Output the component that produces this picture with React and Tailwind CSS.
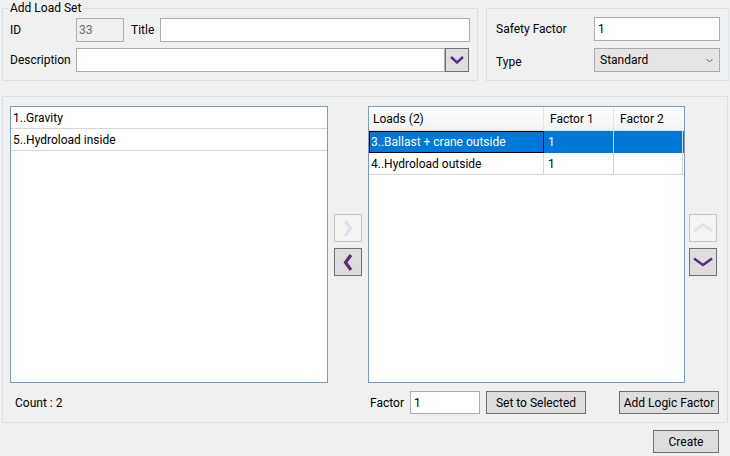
import React from 'react';

const PURPLE = '#5b2c83';

const Chevron = ({ dir, disabled }) => {
  const color = disabled ? '#e2dfe8' : PURPLE;
  if (dir === 'left' || dir === 'right') {
    const pts = dir === 'left' ? '8,1 2.5,8.5 8,16' : '2,1 7.5,8.5 2,16';
    return (
      <svg width="10" height="17" viewBox="0 0 10 17">
        <polyline points={pts} fill="none" stroke={color} strokeWidth="3.2" strokeLinejoin="miter" />
      </svg>
    );
  }
  const pts = dir === 'up' ? '1,8 10,1.5 19,8' : '1,1.5 10,8 19,1.5';
  return (
    <svg width="20" height="10" viewBox="0 0 20 10">
      <polyline points={pts} fill="none" stroke={color} strokeWidth="2.6" strokeLinejoin="miter" />
    </svg>
  );
};

const IconButton = ({ dir, disabled }) => (
  <button
    className={
      disabled
        ? 'w-[28px] h-[28px] flex items-center justify-center border border-[#c4c4c4] bg-[#f4f4f4]'
        : 'w-[28px] h-[28px] flex items-center justify-center border border-[#707070] bg-[#dddddd]'
    }
  >
    <Chevron dir={dir} disabled={disabled} />
  </button>
);

const Button = ({ children, className }) => (
  <button
    className={`h-[23px] flex items-center justify-center border border-[#707070] bg-[#dddddd] text-[12px] text-black ${className}`}
  >
    {children}
  </button>
);

const leftItems = ['1..Gravity', '5..Hydroload inside'];
const rows = [
  { name: '3..Ballast + crane outside', f1: '1', f2: '', selected: true },
  { name: '4..Hydroload outside', f1: '1', f2: '', selected: false },
];

export default function App() {
  return (
    <div className="w-[730px] h-[456px] bg-[#f0f0f0] text-[12px] text-black font-['Roboto',sans-serif] overflow-hidden">
      {/* top groups */}
      <div className="flex items-start pl-[2px] gap-[8px]">
        <fieldset className="w-[475px] h-[81px] border border-[#d5dfe5] px-[7px] pt-[2px]">
          <legend className="-ml-[2px] px-[2px] leading-[16px]">Add Load Set</legend>
          <div className="flex items-center h-[24px]">
            <span className="w-[66px]">ID</span>
            <div className="w-[48px] h-[24px] border border-[#adadad] bg-[#f0f0f0] text-[#6d6d6d] flex items-center pl-[2px]">33</div>
            <span className="w-[29px] ml-[7px]">Title</span>
            <div className="w-[310px] h-[24px] border border-[#adadad] bg-white"></div>
          </div>
          <div className="flex items-center h-[24px] mt-[6px]">
            <span className="w-[66px]">Description</span>
            <div className="w-[369px] h-[24px] border border-[#adadad] bg-white"></div>
            <button className="w-[24px] h-[24px] border border-[#707070] bg-[#dddddd] flex items-center justify-center">
              <svg width="14" height="8" viewBox="0 0 14 8">
                <polyline points="1,1 7,6.5 13,1" fill="none" stroke={PURPLE} strokeWidth="2.4" />
              </svg>
            </button>
          </div>
        </fieldset>
        <div className="mt-[8px] w-[243px] h-[73px] border border-[#d5dfe5] pl-[9px] pt-[8px]">
          <div className="flex items-center h-[24px]">
            <span className="w-[98px]">Safety Factor</span>
            <div className="w-[126px] h-[24px] border border-[#adadad] bg-white flex items-center pl-[3px]">1</div>
          </div>
          <div className="flex items-center h-[24px] mt-[7px]">
            <span className="w-[98px] pt-[4px]">Type</span>
            <div className="w-[126px] h-[24px] border border-[#acacac] bg-[#e5e5e5] flex items-center justify-between pl-[5px] pr-[6px]">
              <span>Standard</span>
              <svg width="7" height="5" viewBox="0 0 7 5">
                <polyline points="0.5,1 3.5,4 6.5,1" fill="none" stroke="#606060" strokeWidth="1" />
              </svg>
            </div>
          </div>
        </div>
      </div>

      {/* main group */}
      <div className="ml-[2px] mt-[15px] w-[726px] h-[327px] border border-[#d5dfe5] pl-[7px] pt-[9px]">
        <div className="flex h-[277px]">
          <div className="w-[318px] h-[277px] border border-[#7a9cc4] bg-white">
            {leftItems.map((t) => (
              <div key={t} className="h-[22px] border-b border-[#d5d5d5] flex items-center pl-[2px]">
                {t}
              </div>
            ))}
          </div>
          <div className="w-[40px] flex flex-col items-center justify-center gap-[6px] pt-[1px]">
            <IconButton dir="right" disabled />
            <IconButton dir="left" />
          </div>
          <div className="w-[317px] h-[277px] border border-[#7a9cc4] bg-white">
            <div className="flex h-[24px] bg-gradient-to-b from-white to-[#f2f2f2] border-b border-[#e0e0e0]">
              <div className="w-[175px] border-r border-[#e5e5e5] flex items-center pl-[4px]">Loads (2)</div>
              <div className="w-[70px] border-r border-[#e5e5e5] flex items-center pl-[6px]">Factor 1</div>
              <div className="w-[70px] flex items-center pl-[6px]">Factor 2</div>
            </div>
            {rows.map((r) => (
              <div
                key={r.name}
                className={
                  r.selected
                    ? 'flex h-[22px] bg-[#0078d7] text-white'
                    : 'flex h-[22px] border-b border-[#d5d5d5]'
                }
              >
                <div
                  className={
                    r.selected
                      ? 'w-[175px] border border-black flex items-center pl-[1px]'
                      : 'w-[175px] border-r border-[#d5d5d5] flex items-center pl-[2px]'
                  }
                >
                  {r.name}
                </div>
                <div className="w-[70px] border-r border-[#d5d5d5] flex items-center pl-[4px]">{r.f1}</div>
                <div className="w-[69px] border-r border-[#d5d5d5] flex items-center">{r.f2}</div>
              </div>
            ))}
          </div>
          <div className="w-[41px] flex flex-col items-center justify-center gap-[6px] pt-[1px] pr-[6px]">
            <IconButton dir="up" disabled />
            <IconButton dir="down" />
          </div>
        </div>
        <div className="flex items-center h-[23px] mt-[8px]">
          <div className="w-[358px] pl-[5px]">Count : 2</div>
          <span className="w-[42px] pl-[2px]">Factor</span>
          <div className="w-[70px] h-[23px] border border-[#adadad] bg-white flex items-center pl-[3px]">1</div>
          <Button className="ml-[6px] w-[100px]">Set to Selected</Button>
          <Button className="ml-[33px] w-[100px]">Add Logic Factor</Button>
        </div>
      </div>

      <div className="flex justify-end pr-[11px] mt-[7px]">
        <Button className="w-[66px]">Create</Button>
      </div>
    </div>
  );
}
